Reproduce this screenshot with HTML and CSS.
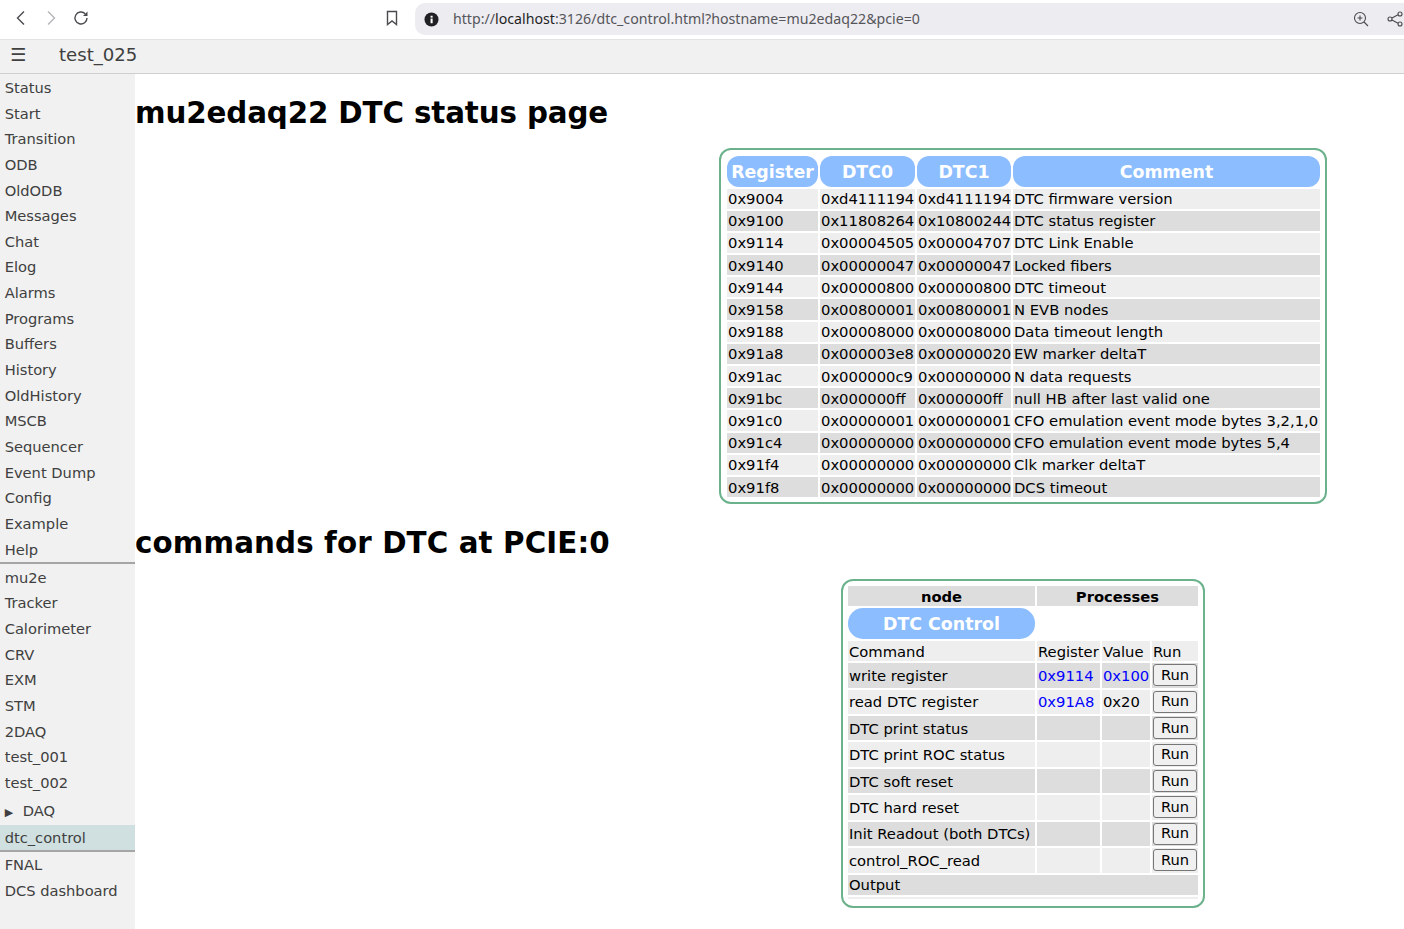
FILE: index.html
```html
<!DOCTYPE html>
<html lang="en">
<head>
<meta charset="utf-8">
<title>mu2edaq22 DTC status page</title>
<link rel="stylesheet" href="styles.css">
</head>
<body>
<div class="browser">
  <div class="nav-icons">
    <svg class="ico" viewBox="0 0 16 16"><path d="M11 1.500 4.500 8l6.500 6.500" class="st"/></svg>
    <svg class="ico" viewBox="0 0 16 16"><path d="M5 1.500 11.500 8 5 14.500" class="st light"/></svg>
    <svg class="ico" viewBox="0 0 16 16"><path d="M14 8a6 6 0 1 1-1.800-4.300" class="st"/><path d="M14.500 1.500v4.500h-4.500z" class="fl"/></svg>
  </div>
  <svg class="ico bookmark" viewBox="0 0 16 16"><path d="M3.500 1.500h9v13L8 11l-4.500 3.500z" class="st"/></svg>
  <div class="urlbar">
    <svg class="info" viewBox="0 0 16 16"><circle cx="8" cy="8" r="7.500" fill="#202124"/><rect x="7" y="7" width="2.200" height="5" fill="#fff"/><rect x="7" y="4" width="2.200" height="2" fill="#fff"/></svg>
    <span class="url"><span class="dim">http://</span>localhost<span class="dim">:3126/dtc_control.html?hostname=mu2edaq22&amp;pcie=0</span></span>
    <svg class="ico zoomi" viewBox="0 0 16 16"><circle cx="7" cy="7" r="5.500" class="st thin"/><path d="M11 11l4 4M7 4.500v5M4.500 7h5" class="st thin"/></svg>
    <svg class="ico sharei" viewBox="0 0 16 16"><circle cx="13" cy="3" r="2" class="st thin"/><circle cx="13" cy="13" r="2" class="st thin"/><circle cx="3" cy="8" r="2" class="st thin"/><path d="M5 7l6-3.200M5 9l6 3.200" class="st thin"/></svg>
  </div>
</div>
<header class="topbar">
  <span class="burger">☰</span>
  <span class="expt">test_025</span>
</header>
<div class="page">
  <nav class="side">
    <a class="item">Status</a>
    <a class="item">Start</a>
    <a class="item">Transition</a>
    <a class="item">ODB</a>
    <a class="item">OldODB</a>
    <a class="item">Messages</a>
    <a class="item">Chat</a>
    <a class="item">Elog</a>
    <a class="item">Alarms</a>
    <a class="item">Programs</a>
    <a class="item">Buffers</a>
    <a class="item">History</a>
    <a class="item">OldHistory</a>
    <a class="item">MSCB</a>
    <a class="item">Sequencer</a>
    <a class="item">Event Dump</a>
    <a class="item">Config</a>
    <a class="item">Example</a>
    <a class="item">Help</a>
    <div class="sep"></div>
    <a class="item group">mu2e</a>
    <a class="item">Tracker</a>
    <a class="item">Calorimeter</a>
    <a class="item">CRV</a>
    <a class="item">EXM</a>
    <a class="item">STM</a>
    <a class="item">2DAQ</a>
    <a class="item">test_001</a>
    <a class="item">test_002</a>
    <a class="item daq"><span class="tri">▶</span>DAQ</a>
    <a class="item active">dtc_control</a>
    <div class="sep"></div>
    <a class="item">FNAL</a>
    <a class="item">DCS dashboard</a>
  </nav>
  <main class="main">
    <h1 class="title first">mu2edaq22 DTC status page</h1>
    <div class="tablewrap">
      <div class="frame frame-regs">
      <table class="mtable regs">
        <colgroup><col class="c-reg"><col class="c-dtc"><col class="c-dtc1"><col class="c-com"></colgroup>
        <tr><th class="pill">Register</th><th class="pill">DTC0</th><th class="pill">DTC1</th><th class="pill">Comment</th></tr>
        <tr><td>0x9004</td><td>0xd4111194</td><td>0xd4111194</td><td>DTC firmware version</td></tr>
        <tr><td>0x9100</td><td>0x11808264</td><td>0x10800244</td><td>DTC status register</td></tr>
        <tr><td>0x9114</td><td>0x00004505</td><td>0x00004707</td><td>DTC Link Enable</td></tr>
        <tr><td>0x9140</td><td>0x00000047</td><td>0x00000047</td><td>Locked fibers</td></tr>
        <tr><td>0x9144</td><td>0x00000800</td><td>0x00000800</td><td>DTC timeout</td></tr>
        <tr><td>0x9158</td><td>0x00800001</td><td>0x00800001</td><td>N EVB nodes</td></tr>
        <tr><td>0x9188</td><td>0x00008000</td><td>0x00008000</td><td>Data timeout length</td></tr>
        <tr><td>0x91a8</td><td>0x000003e8</td><td>0x00000020</td><td>EW marker deltaT</td></tr>
        <tr><td>0x91ac</td><td>0x000000c9</td><td>0x00000000</td><td>N data requests</td></tr>
        <tr><td>0x91bc</td><td>0x000000ff</td><td>0x000000ff</td><td>null HB after last valid one</td></tr>
        <tr><td>0x91c0</td><td>0x00000001</td><td>0x00000001</td><td>CFO emulation event mode bytes 3,2,1,0</td></tr>
        <tr><td>0x91c4</td><td>0x00000000</td><td>0x00000000</td><td>CFO emulation event mode bytes 5,4</td></tr>
        <tr><td>0x91f4</td><td>0x00000000</td><td>0x00000000</td><td>Clk marker deltaT</td></tr>
        <tr><td>0x91f8</td><td>0x00000000</td><td>0x00000000</td><td>DCS timeout</td></tr>
      </table>
      </div>
    </div>
    <h1 class="title second">commands for DTC at PCIE:0</h1>
    <div class="tablewrap">
      <div class="frame frame-cmds">
      <table class="mtable cmds">
        <colgroup><col class="c-cmd"><col class="c-rg"><col class="c-val"><col class="c-run"></colgroup>
        <tr class="heads"><th>node</th><th colspan="3">Processes</th></tr>
        <tr class="plain"><th class="pill big">DTC Control</th><td colspan="3"></td></tr>
        <tr class="labels"><td>Command</td><td>Register</td><td>Value</td><td>Run</td></tr>
        <tr class="cmd"><td>write register</td><td class="link">0x9114</td><td class="link">0x100</td><td><button class="run">Run</button></td></tr>
        <tr class="cmd"><td>read DTC register</td><td class="link">0x91A8</td><td>0x20</td><td><button class="run">Run</button></td></tr>
        <tr class="cmd"><td>DTC print status</td><td></td><td></td><td><button class="run">Run</button></td></tr>
        <tr class="cmd"><td>DTC print ROC status</td><td></td><td></td><td><button class="run">Run</button></td></tr>
        <tr class="cmd"><td>DTC soft reset</td><td></td><td></td><td><button class="run">Run</button></td></tr>
        <tr class="cmd"><td>DTC hard reset</td><td></td><td></td><td><button class="run">Run</button></td></tr>
        <tr class="cmd"><td>Init Readout (both DTCs)</td><td></td><td></td><td><button class="run">Run</button></td></tr>
        <tr class="cmd"><td>control_ROC_read</td><td></td><td></td><td><button class="run">Run</button></td></tr>
        <tr class="output"><td colspan="4">Output</td></tr>
        <tr class="empty"><td colspan="4"></td></tr>
      </table>
      </div>
    </div>
  </main>
</div>
</body>
</html>
```
FILE: styles.css
```css
html, body { margin: 0; padding: 0; height: 100%; overflow: hidden; background: #fff; }
body { font-family: "DejaVu Sans", sans-serif; font-size: 14.667px; color: #000; display: flex; flex-direction: column; }

.browser { height: 39px; flex: none; display: flex; align-items: flex-start; border-bottom: 1px solid #e3e3e3; background: #fff; }
.nav-icons { display: flex; gap: 14px; padding: 10px 0 0 13px; width: 371px; }
.ico { width: 16px; height: 16px; flex: none; }
.st { fill: none; stroke: #4a4a4f; stroke-width: 1.4; }
.st.light { stroke: #b5b5b8; }
.st.thin { stroke-width: 1.1; }
.fl { fill: #4a4a4f; }
.bookmark { margin-top: 10px; }
.urlbar { margin: 3px 0 0 15px; height: 32px; flex: 1; background: #edecf1; border-radius: 10px 0 0 10px; display: flex; align-items: center; padding-left: 9px; }
.info { width: 15px; height: 15px; flex: none; }
.url { font-family: "Noto Sans", sans-serif; font-size: 14.18px; color: #1f1f1f; margin-left: 14px; flex: 1; white-space: nowrap; position: relative; top: -1px; }
.dim { color: #55555a; }
.zoomi { margin-right: 18px; }
.sharei { margin-right: 1px; }

.topbar { flex: none; background: #f1f1f1; border-bottom: 1px solid #cfcfcf; display: flex; align-items: center; padding-bottom: 5px; box-sizing: border-box; height: 34px; color: #404040; }
.burger { font-size: 18px; width: 59px; padding-left: 10px; box-sizing: border-box; }
.expt { font-size: 18.1px; }

.page { flex: 1; display: flex; min-height: 0; }
.side { width: 135px; flex: none; background: #f1f1f1; display: flex; flex-direction: column; padding-top: 1px; box-sizing: border-box; }
.item { display: block; height: 25.65px; line-height: 25.65px; padding-left: 4.67px; color: #404040; white-space: nowrap; box-sizing: border-box; flex: none; }
.daq { height: 29px; line-height: 29px; }
.tri { font-size: 11px; display: inline-block; width: 18px; vertical-align: 0; }
.active { background: #d0e0e0; }
.sep { height: 2px; flex: none; background: #a5a5a5; }
.group { margin-top: 0.6px; }

.main { flex: 1; min-width: 0; }
.title { font-size: 29.33px; font-weight: bold; margin: 0; line-height: 37px; }
.first { margin-top: 21px; margin-bottom: 16px; letter-spacing: -0.12px; }
.second { margin-top: 21px; margin-bottom: 17px; letter-spacing: 0.12px; }
.tablewrap { padding-left: 507px; display: flex; justify-content: center; }
.frame { border: 2px solid #6bb28c; border-radius: 12px; background: #fff; }
.frame-regs { padding: 4px 3px 3px 4px; }
.frame-cmds { padding: 3px 2.5px 5px 2.5px; }

.mtable { border-collapse: separate; border-spacing: 2px; table-layout: fixed; font-size: 14.75px; }
.mtable td { padding: 1px; white-space: nowrap; height: 18.2px; line-height: 17px; }
.mtable tr:nth-child(even) td { background: #eeeeee; }
.mtable tr:nth-child(odd) td { background: #dddddd; }
.mtable th { padding: 1px; }
.pill { background: #8cbdff; color: #fff; font-size: 17.4px; font-weight: bold; border-radius: 12px; height: 28.5px; }
.regs { width: 597px; }
.regs .pill { padding: 2px 1px 1px; height: 27.5px; }
.c-reg { width: 91px; } .c-dtc { width: 95px; } .c-dtc1 { width: 94px; } .c-com { width: 307px; }

.cmds { width: 354px; }
.c-cmd { width: 187px; } .c-rg { width: 63px; } .c-val { width: 48px; } .c-run { width: 46px; }
.heads th { background: #dddddd; height: 18px; line-height: 17px; }
.cmds .pill.big { height: 28px; padding-top: 2px; border-radius: 15px; }
.mtable.cmds tr:nth-child(even) td { background: #dddddd; }
.mtable.cmds tr:nth-child(odd) td { background: #eeeeee; }
.mtable.cmds tr.plain td { background: #fff; }
.mtable.cmds tr.cmd td { height: 24.43px; padding-top: 0; padding-bottom: 0; }
.mtable.cmds tr.empty td { height: 2px; padding: 0; line-height: 0; }
.mtable.cmds tr.labels td { height: 18px; }
.mtable.cmds tr.output td { height: 18px; }
.mtable.cmds td.link { color: #0000ff; }
.run { display: block; width: 44px; height: 22px; margin: 0 auto; padding: 0 0 2px; font-family: "DejaVu Sans", sans-serif; font-size: 14.667px; color: #000; background: #f0f0f0; border: 1px solid #767676; border-radius: 3px; }
```
